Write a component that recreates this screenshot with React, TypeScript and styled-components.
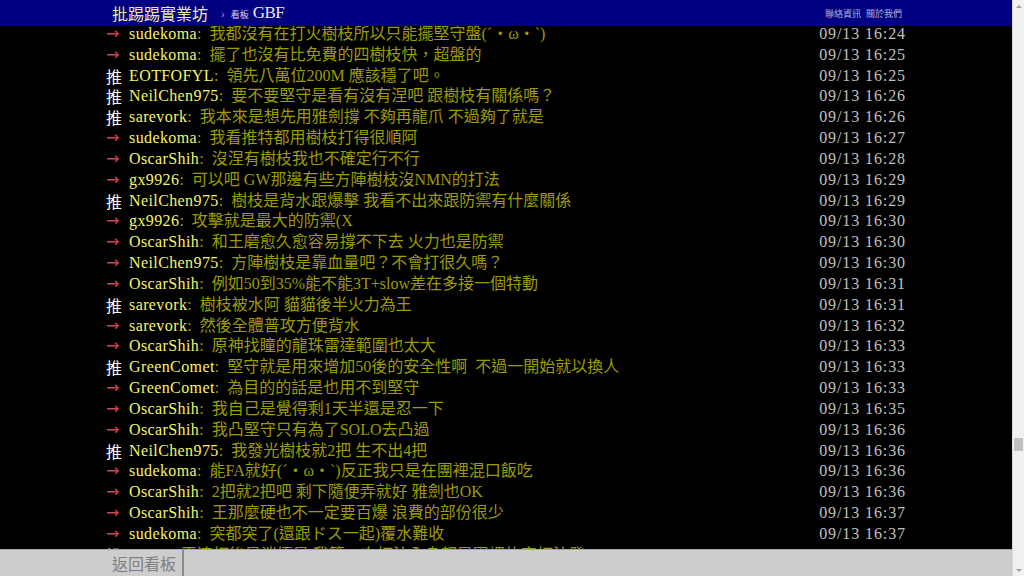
import React from 'react'
import styled, { createGlobalStyle } from 'styled-components'

const GlobalStyle = createGlobalStyle`
  html, body {
    margin: 0;
    padding: 0;
    height: 100%;
    overflow: hidden;
    background: #000;
  }
  #root {
    height: 100%;
  }
`

interface Push {
  tag: '推' | '→'
  user: string
  content: string
  time: string
}

const pushes: Push[] = [
  { tag: '→', user: 'sudekoma', content: '我都沒有在打火樹枝所以只能擺堅守盤(´・ω・`)', time: '09/13 16:24' },
  { tag: '→', user: 'sudekoma', content: '擺了也沒有比免費的四樹枝快，超盤的', time: '09/13 16:25' },
  { tag: '推', user: 'EOTFOFYL', content: '領先八萬位200M 應該穩了吧。', time: '09/13 16:25' },
  { tag: '推', user: 'NeilChen975', content: '要不要堅守是看有沒有涅吧 跟樹枝有關係嗎？', time: '09/13 16:26' },
  { tag: '推', user: 'sarevork', content: '我本來是想先用雅劍撐 不夠再龍爪 不過夠了就是', time: '09/13 16:26' },
  { tag: '→', user: 'sudekoma', content: '我看推特都用樹枝打得很順阿', time: '09/13 16:27' },
  { tag: '→', user: 'OscarShih', content: '沒涅有樹枝我也不確定行不行', time: '09/13 16:28' },
  { tag: '→', user: 'gx9926', content: '可以吧 GW那邊有些方陣樹枝沒NMN的打法', time: '09/13 16:29' },
  { tag: '推', user: 'NeilChen975', content: '樹枝是背水跟爆擊 我看不出來跟防禦有什麼關係', time: '09/13 16:29' },
  { tag: '→', user: 'gx9926', content: '攻擊就是最大的防禦(X', time: '09/13 16:30' },
  { tag: '→', user: 'OscarShih', content: '和王磨愈久愈容易撐不下去 火力也是防禦', time: '09/13 16:30' },
  { tag: '→', user: 'NeilChen975', content: '方陣樹枝是靠血量吧？不會打很久嗎？', time: '09/13 16:30' },
  { tag: '→', user: 'OscarShih', content: '例如50到35%能不能3T+slow差在多接一個特動', time: '09/13 16:31' },
  { tag: '推', user: 'sarevork', content: '樹枝被水阿 貓貓後半火力為王', time: '09/13 16:31' },
  { tag: '→', user: 'sarevork', content: '然後全體普攻方便背水', time: '09/13 16:32' },
  { tag: '→', user: 'OscarShih', content: '原神找瞳的龍珠雷達範圍也太大', time: '09/13 16:33' },
  { tag: '推', user: 'GreenComet', content: '堅守就是用來增加50後的安全性啊  不過一開始就以換人', time: '09/13 16:33' },
  { tag: '→', user: 'GreenComet', content: '為目的的話是也用不到堅守', time: '09/13 16:33' },
  { tag: '→', user: 'OscarShih', content: '我自己是覺得剩1天半還是忍一下', time: '09/13 16:35' },
  { tag: '→', user: 'OscarShih', content: '我凸堅守只有為了SOLO去凸過', time: '09/13 16:36' },
  { tag: '推', user: 'NeilChen975', content: '我發光樹枝就2把 生不出4把', time: '09/13 16:36' },
  { tag: '→', user: 'sudekoma', content: '能FA就好(´・ω・`)反正我只是在團裡混口飯吃', time: '09/13 16:36' },
  { tag: '→', user: 'OscarShih', content: '2把就2把吧 剩下隨便弄就好 雅劍也OK', time: '09/13 16:36' },
  { tag: '→', user: 'OscarShih', content: '王那麼硬也不一定要百爆 浪費的部份很少', time: '09/13 16:37' },
  { tag: '→', user: 'sudekoma', content: '突都突了(還跟ドス一起)覆水難收', time: '09/13 16:37' },
  { tag: '推', user: 'DIIIE', content: '王連打後是消極是 我第一次打法全身都是團裡的率打法發', time: '09/13 16:37' },
]

const Page = styled.div`
  display: flex;
  height: 100vh;
`

const Main = styled.div`
  flex: 1;
  min-width: 0;
  display: flex;
  flex-direction: column;
  background: #000;
`

const TopBar = styled.div`
  flex-shrink: 0;
  height: 26px;
  background: #000080;
  position: relative;
  z-index: 1;
`

const BarInner = styled.div`
  width: 800px;
  height: 100%;
  margin: 0 auto;
  box-sizing: border-box;
  padding: 0 4px 0 6px;
  display: flex;
  align-items: center;
`

const SiteTitle = styled.a`
  color: #ecec9c;
  font-family: 'Noto Sans CJK TC', sans-serif;
  font-size: 16px;
  line-height: 26px;
  text-decoration: none;
`

const Crumb = styled.span`
  color: #9a9ac8;
  font-family: 'Liberation Sans', sans-serif;
  font-size: 11px;
  margin: 2px 6px 0 13px;
`

const BoardLabel = styled.span`
  color: #d8d8e8;
  font-family: 'Noto Sans CJK TC', sans-serif;
  font-size: 9px;
  margin: 2px 4px 0 0;
`

const BoardName = styled.a`
  color: #ececf4;
  font-family: 'Liberation Serif', serif;
  font-size: 17px;
  letter-spacing: -0.5px;
  text-decoration: none;
`

const NavLinks = styled.div`
  margin-left: auto;
  display: flex;
  gap: 5px;
`

const NavLink = styled.a`
  color: #b0b0d8;
  font-family: 'Noto Sans CJK TC', sans-serif;
  font-size: 9px;
  text-decoration: none;
`

const Screen = styled.div`
  flex: 1;
  min-height: 0;
  overflow: hidden;
  margin-top: -2px;
`

const PushRow = styled.div`
  width: 800px;
  margin: 0 auto;
  display: flex;
  font-family: 'Liberation Serif', 'Noto Sans CJK TC', serif;
  font-size: 16px;
  line-height: 20.83px;
  white-space: pre;
`

const PushTag = styled.span<{ $arrow: boolean }>`
  flex-shrink: 0;
  width: 23px;
  color: ${(p) => (p.$arrow ? '#d04452' : '#ffffff')};
  font-family: ${(p) => (p.$arrow ? "'DejaVu Sans', sans-serif" : "'Noto Sans CJK TC', sans-serif")};
`

const PushUser = styled.span`
  color: #f4f466;
  letter-spacing: 0.4px;
`

const PushContent = styled.span`
  flex: 1;
  color: #9c9c00;
  overflow: hidden;
`

const PushTime = styled.span`
  flex-shrink: 0;
  color: #c0c0c0;
  letter-spacing: 0.9px;
`

const BottomBar = styled.div`
  flex-shrink: 0;
  height: 26px;
  background: #cdcdcd;
  border-top: 1px solid #a8a8a8;
  position: relative;
  z-index: 1;
`

const BottomInner = styled.div`
  width: 800px;
  height: 100%;
  margin: 0 auto;
  display: flex;
`

const BackLink = styled.a`
  padding: 0 6px;
  border-right: 2px solid #8a8a8a;
  color: #808080;
  font-family: 'Noto Sans CJK TC', sans-serif;
  font-size: 16px;
  line-height: 26px;
  text-decoration: none;
`

const ScrollTrack = styled.div`
  flex-shrink: 0;
  width: 11px;
  background: #f1f1f1;
  border-left: 1px solid #dcdcdc;
  display: flex;
  flex-direction: column;
  align-items: center;
`

const Arrow = styled.div<{ $down?: boolean }>`
  width: 0;
  height: 0;
  margin: ${(p) => (p.$down ? 'auto 0 4px' : '5px 0 0')};
  border-left: 3px solid transparent;
  border-right: 3px solid transparent;
  ${(p) => (p.$down ? 'border-top: 3px solid #a0a0a0;' : 'border-bottom: 3px solid #a0a0a0;')}
`

const Thumb = styled.div`
  width: 9px;
  height: 13px;
  margin-top: 430px;
  background: #c1c1c1;
`

export default function App() {
  return (
    <Page>
      <GlobalStyle />
      <Main>
        <TopBar>
          <BarInner>
            <SiteTitle>批踢踢實業坊</SiteTitle>
            <Crumb>›</Crumb>
            <BoardLabel>看板</BoardLabel>
            <BoardName>GBF</BoardName>
            <NavLinks>
              <NavLink>聯絡資訊</NavLink>
              <NavLink>關於我們</NavLink>
            </NavLinks>
          </BarInner>
        </TopBar>
        <Screen>
          {pushes.map((p, i) => (
            <PushRow key={i}>
              <PushTag $arrow={p.tag === '→'}>{p.tag}</PushTag>
              <PushUser>{p.user}</PushUser>
              <PushContent>:  {p.content}</PushContent>
              <PushTime> {p.time}</PushTime>
            </PushRow>
          ))}
        </Screen>
        <BottomBar>
          <BottomInner>
            <BackLink>返回看板</BackLink>
          </BottomInner>
        </BottomBar>
      </Main>
      <ScrollTrack>
        <Arrow />
        <Thumb />
        <Arrow $down />
      </ScrollTrack>
    </Page>
  )
}
